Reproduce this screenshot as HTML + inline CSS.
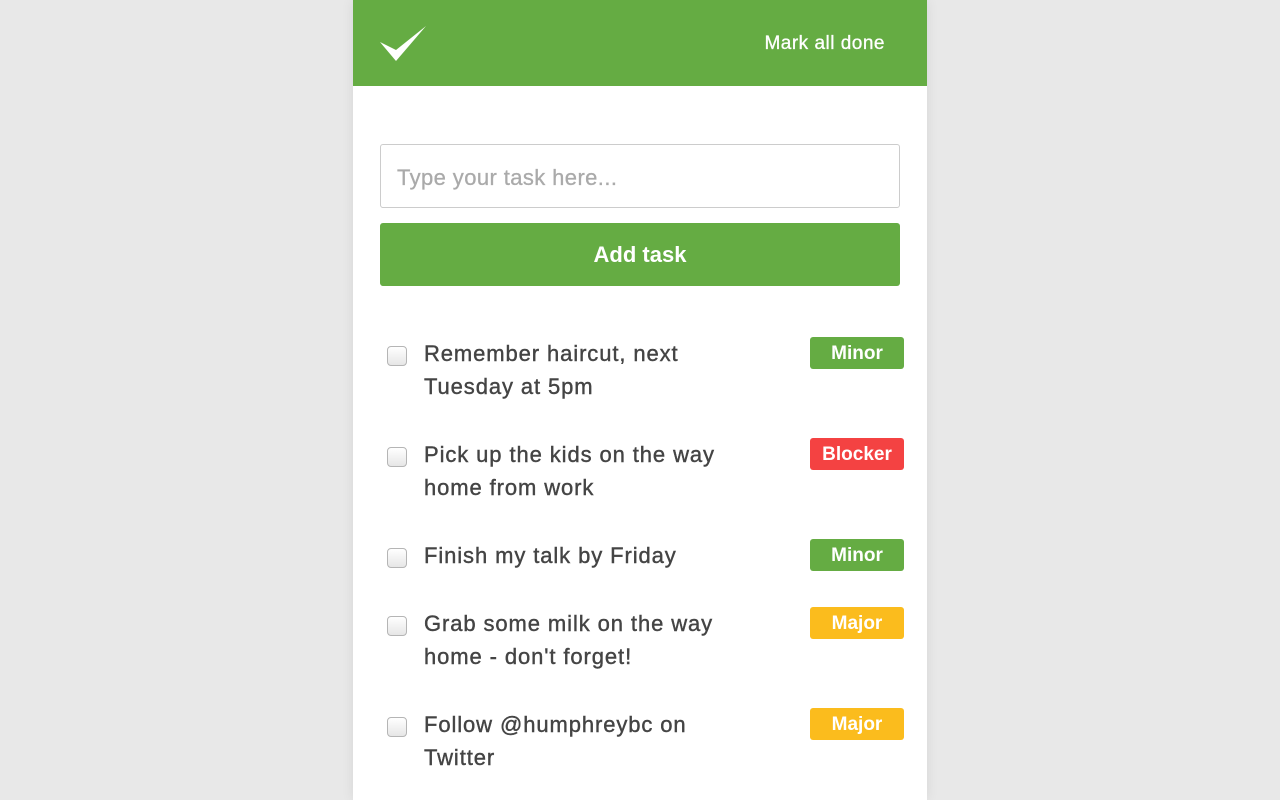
<!DOCTYPE html>
<html><head><style>
body{margin:0;background:#e8e8e8;font-family:"Liberation Sans",sans-serif;}
.p{position:absolute;left:353px;top:0;width:574px;height:800px;background:#fff;box-shadow:0 0 12px rgba(0,0,0,.08);}
.h{position:absolute;left:0;top:0;width:574px;height:86px;background:#65ac43;}
.mad{position:absolute;right:42px;top:33px;color:#fff;font-size:19px;letter-spacing:0.5px;-webkit-text-stroke:0.3px #fff;}
.in{position:absolute;left:27px;top:144px;height:64px;border:1px solid #ccc;border-radius:3px;box-sizing:border-box;width:520px;font-size:22px;color:#aaa;padding:20px 16px;letter-spacing:0.4px;-webkit-text-stroke:0.3px #aaa;}
.btn{position:absolute;left:27px;top:223px;width:520px;height:63px;background:#65ac43;border-radius:3px;color:#fff;font-weight:bold;font-size:22px;text-align:center;line-height:64px;}
.t{position:absolute;left:71px;font-size:22px;color:#444;line-height:33px;width:300px;letter-spacing:0.9px;-webkit-text-stroke:0.4px #444;}
.cb{position:absolute;left:34px;width:18px;height:18px;border:1px solid #b5b5b5;border-radius:4px;background:linear-gradient(#fff,#e6e6e6);}
.tag{position:absolute;left:457px;width:94px;height:32px;border-radius:3px;color:#fff;font-weight:bold;font-size:19px;text-align:center;line-height:34px;}
.g{background:#65ac43}.r{background:#f44242}.y{background:#fbbc1d}
</style></head><body>
<div class="p">
<div class="h"><svg width="100" height="86" style="position:absolute;left:0;top:0"><path d="M27 42 L43 61 L73 26 L43 50 Z" fill="#fff"/></svg><div class="mad">Mark all done</div></div>
<div class="in">Type your task here...</div>
<div class="btn">Add task</div>
<div class="cb" style="top:346px"></div><div class="t" style="top:337px">Remember haircut, next Tuesday at 5pm</div><div class="tag g" style="top:337px">Minor</div>
<div class="cb" style="top:447px"></div><div class="t" style="top:438px">Pick up the kids on the way home from work</div><div class="tag r" style="top:438px">Blocker</div>
<div class="cb" style="top:548px"></div><div class="t" style="top:539px">Finish my talk by Friday</div><div class="tag g" style="top:539px">Minor</div>
<div class="cb" style="top:616px"></div><div class="t" style="top:607px">Grab some milk on the way home - don't forget!</div><div class="tag y" style="top:607px">Major</div>
<div class="cb" style="top:717px"></div><div class="t" style="top:708px">Follow @humphreybc on Twitter</div><div class="tag y" style="top:708px">Major</div>
</div>
</body></html>
